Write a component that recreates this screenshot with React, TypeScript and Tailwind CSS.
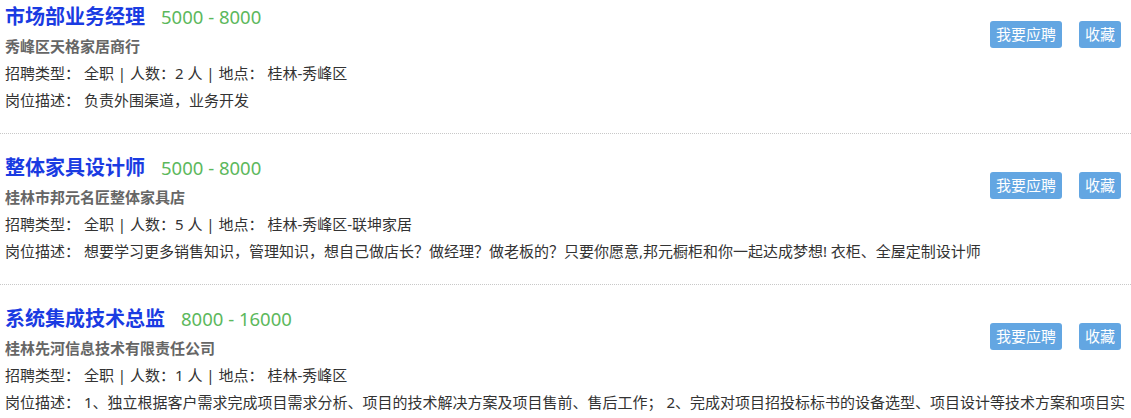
import React from "react";

type Job = {
  title: string;
  salary: string;
  company: string;
  count: string;
  place: string;
  desc: string;
};

const jobs: Job[] = [
  {
    title: "市场部业务经理",
    salary: "5000 - 8000",
    company: "秀峰区天格家居商行",
    count: "2",
    place: "桂林-秀峰区",
    desc: "负责外围渠道，业务开发",
  },
  {
    title: "整体家具设计师",
    salary: "5000 - 8000",
    company: "桂林市邦元名匠整体家具店",
    count: "5",
    place: "桂林-秀峰区-联坤家居",
    desc: "想要学习更多销售知识，管理知识，想自己做店长？做经理？做老板的？只要你愿意,邦元橱柜和你一起达成梦想! 衣柜、全屋定制设计师",
  },
  {
    title: "系统集成技术总监",
    salary: "8000 - 16000",
    company: "桂林先河信息技术有限责任公司",
    count: "1",
    place: "桂林-秀峰区",
    desc: "1、独立根据客户需求完成项目需求分析、项目的技术解决方案及项目售前、售后工作； 2、完成对项目招投标标书的设备选型、项目设计等技术方案和项目实施计划，负责项目实施。",
  },
];

export default function App() {
  return (
    <div
      className="w-[1131px] bg-white text-[#333] overflow-hidden"
      style={{ fontFamily: '"Noto Sans", "Noto Sans CJK SC", sans-serif' }}
    >
      {jobs.map((j, i) => (
        <div
          key={i}
          className={`pl-[5px] pr-[6px] pb-[19px] border-b border-dotted border-[#c8c8c8] ${
            i === 0 ? "pt-[2px]" : "pt-[19px]"
          }`}
        >
          <div className="flex items-start justify-between">
            <div>
              <div className="flex items-baseline h-[30px] leading-[30px]">
                <span className="text-[20px] font-bold text-[#1a3be2]">{j.title}</span>
                <span className="ml-[16px] text-[18.5px] text-[#5cb85c]">{j.salary}</span>
              </div>
              <div className="text-[15px] leading-[28px] font-bold text-[#666]">{j.company}</div>
            </div>
            <div className="flex gap-[17px] mt-[19px] mr-[4px]">
              <button className="h-[27px] px-[6px] rounded-[3px] bg-[#63a6e2] text-white text-[15px] leading-[27px]">
                我要应聘
              </button>
              <button className="h-[27px] px-[6px] rounded-[3px] bg-[#63a6e2] text-white text-[15px] leading-[27px]">
                收藏
              </button>
            </div>
          </div>
          <div className="text-[15px] leading-[27px]">
            {`招聘类型： 全职 | 人数：${j.count} 人 | 地点： ${j.place}`}
          </div>
          <div className="text-[15px] leading-[27px]">
            {"岗位描述： "}
            {j.desc}
          </div>
        </div>
      ))}
    </div>
  );
}
